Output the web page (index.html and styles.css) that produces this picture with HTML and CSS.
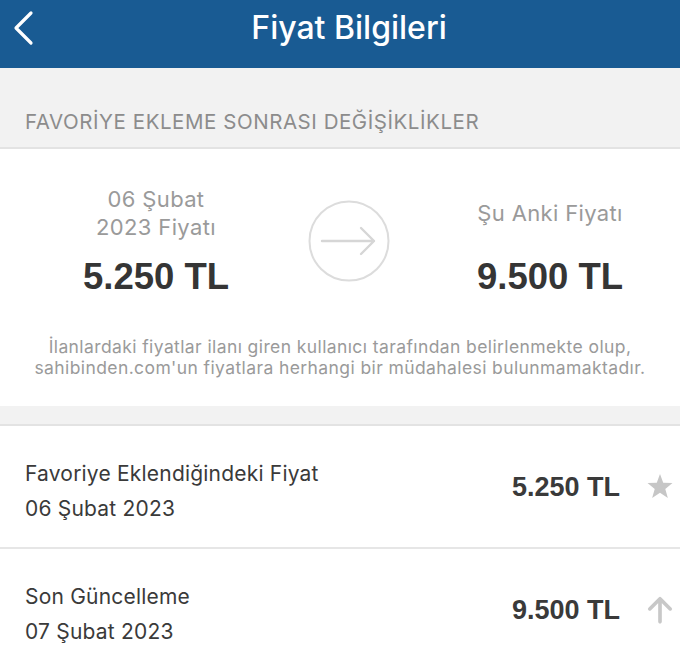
FILE: index.html
```html
<!DOCTYPE html>
<html lang="tr">
<head>
<meta charset="utf-8">
<title>Fiyat Bilgileri</title>
<link rel="stylesheet" href="styles.css">
</head>
<body>
<div class="app">
  <header class="nav">
    <svg class="back" width="24" height="36" viewBox="0 0 24 36" aria-hidden="true">
      <path d="M19 3 L4 18 L19 33" fill="none" stroke="#fff" stroke-width="3.2" stroke-linecap="round" stroke-linejoin="round"/>
    </svg>
    <h1 class="nav-title">Fiyat Bilgileri</h1>
  </header>

  <div class="section-head">FAVORİYE EKLEME SONRASI DEĞİŞİKLİKLER</div>

  <section class="compare">
    <div class="compare-grid">
      <div class="col col-left">
        <div class="col-label">06 Şubat<br>2023 Fiyatı</div>
        <div class="col-price">5.250 TL</div>
      </div>
      <div class="circle-wrap">
        <svg class="circle" width="82" height="82" viewBox="0 0 82 82" aria-hidden="true">
          <circle cx="41" cy="41" r="39.5" fill="none" stroke="#dcdcdc" stroke-width="2"/>
          <path d="M14 41 H66 M53 28 L66 41 L53 54" fill="none" stroke="#d6d6d6" stroke-width="2.4" stroke-linecap="round" stroke-linejoin="round"/>
        </svg>
      </div>
      <div class="col col-right">
        <div class="col-label">Şu Anki Fiyatı</div>
        <div class="col-price">9.500 TL</div>
      </div>
    </div>
    <p class="disclaimer">İlanlardaki fiyatlar ilanı giren kullanıcı tarafından belirlenmekte olup,<br>sahibinden.com'un fiyatlara herhangi bir müdahalesi bulunmamaktadır.</p>
  </section>

  <div class="band"></div>

  <div class="row">
    <div class="row-text">
      <div class="row-title">Favoriye Eklendiğindeki Fiyat</div>
      <div class="row-date">06 Şubat 2023</div>
    </div>
    <div class="row-price">5.250 TL</div>
    <svg class="row-icon" width="28" height="28" viewBox="0 0 26 26" aria-hidden="true">
      <path d="M13 1 L16 9.1 L24.6 9.4 L17.9 14.8 L20.3 23.2 L13 18.4 L5.7 23.2 L8.1 14.8 L1.4 9.4 L10 9.1 Z" fill="#c6c6c6"/>
    </svg>
  </div>
  <div class="row">
    <div class="row-text">
      <div class="row-title">Son Güncelleme</div>
      <div class="row-date">07 Şubat 2023</div>
    </div>
    <div class="row-price">9.500 TL</div>
    <svg class="row-icon" width="28" height="28" viewBox="0 0 26 26" aria-hidden="true">
      <path d="M13 24 V3 M3.5 12 L13 2.5 L22.5 12" fill="none" stroke="#c8c8c8" stroke-width="3.4" stroke-linecap="round" stroke-linejoin="round"/>
    </svg>
  </div>
</div>
</body>
</html>
```

FILE: styles.css
```css
* { box-sizing: border-box; }
html, body { margin: 0; padding: 0; }
body {
  background: #ffffff;
  font-family: "Inter", "Roboto", "Liberation Sans", sans-serif;
  width: 680px;
  height: 664px;
  overflow: hidden;
}
.app { width: 680px; }

.nav {
  position: relative;
  height: 68px;
  background: #195b93;
  display: flex;
  justify-content: center;
  align-items: flex-start;
  padding-top: 10px;
  padding-left: 18px;
}
.back {
  position: absolute;
  left: 12px;
  top: 10px;
}
.nav-title {
  margin: 0;
  color: #ffffff;
  font-size: 32px;
  font-weight: 500;
  line-height: 36px;
}

.section-head {
  background: #f2f2f2;
  height: 81px;
  padding: 42px 0 0 25px;
  font-size: 20.5px;
  line-height: 24px;
  letter-spacing: 0.55px;
  color: #8c8c8c;
  border-bottom: 2px solid #e3e3e3;
}

.compare {
  background: #ffffff;
  height: 257px;
  padding-top: 36px;
}
.compare-grid {
  display: grid;
  grid-template-columns: 308px 108px 1fr;
  align-items: center;
}
.col {
  display: flex;
  flex-direction: column;
  align-items: center;
  gap: 16px;
}
.col-left { padding-left: 4px; }
.col-right { padding-left: 4px; }
.col-label {
  height: 56px;
  display: flex;
  align-items: center;
  text-align: center;
  font-size: 22px;
  line-height: 28px;
  letter-spacing: 0.35px;
  color: #9a9a9a;
}
.col-price {
  font-family: "Liberation Sans", Arial, sans-serif;
  font-weight: 700;
  font-size: 36.5px;
  line-height: 40px;
  color: #353535;
}
.circle-wrap { display: flex; }
.circle { display: block; }

.disclaimer {
  margin: 39px 0 0;
  text-align: center;
  font-size: 17.5px;
  line-height: 21px;
  letter-spacing: 0.4px;
  color: #9a9a9a;
}

.band {
  height: 20px;
  background: #f2f2f2;
  border-bottom: 2px solid #e3e3e3;
}

.row {
  display: flex;
  align-items: center;
  height: 123px;
  padding: 30px 6px 21px 25px;
  border-bottom: 2px solid #e6e6e6;
}
.row-text { flex: 1; }
.row-title, .row-date {
  font-size: 21px;
  line-height: 35px;
  letter-spacing: 0.2px;
  color: #3a3a3a;
}
.row-price {
  font-family: "Liberation Sans", Arial, sans-serif;
  font-weight: 700;
  font-size: 27px;
  line-height: 32px;
  color: #3a3a3a;
  margin-bottom: 8px;
  margin-right: 26px;
}
.row-icon { display: block; margin-bottom: 8px; }
```
